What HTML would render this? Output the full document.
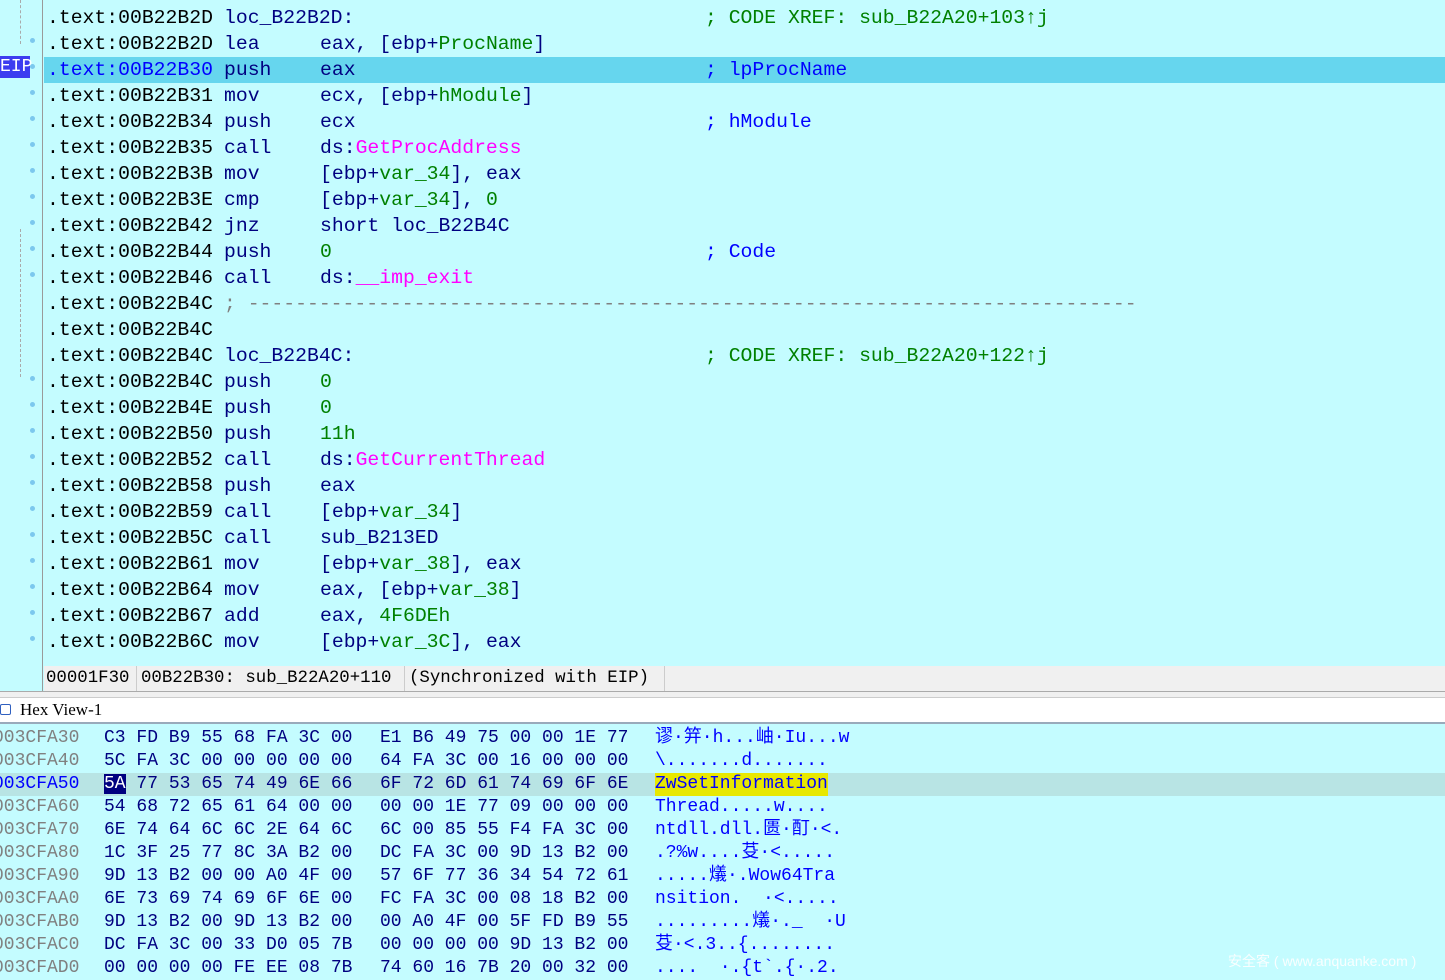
<!DOCTYPE html>
<html><head><meta charset="utf-8"><style>
body{margin:0;width:1445px;height:980px;overflow:hidden;background:#c4fcff;position:relative;font-family:"Liberation Mono","Noto Sans CJK SC",monospace}
.ida{position:absolute;left:0;top:0;width:1445px;height:664px;background:#c4fcff}
.gut{position:absolute;left:42px;top:0;width:1px;height:692px;background:#9a9a9a}
.r{position:absolute;left:0;height:26px;width:1445px;font-size:19.75px;line-height:26px;white-space:pre}
.r span{position:absolute}
.a{left:47px;color:#000}.m{left:224px;color:#000080}.o{left:320px;color:#000080}.c{left:705px;color:#0000ff}
.g{color:#008000}.p{color:#ff00ff}.cg{color:#008000}
.dot{position:absolute;left:30px;width:5px;height:5px;border-radius:3px;background:#7cc8ee}
.hl{background:#66d6ee;left:44px!important;width:1401px!important}
.hl .a{left:3px}.hl .m{left:180px}.hl .o{left:276px}.hl .c{left:661px}
.stat{position:absolute;left:44px;top:666px;width:1401px;height:25px;background:#f0f0f0;font-family:"Liberation Mono",monospace;font-size:17.4px;line-height:25px;color:#000;white-space:pre}
.stat span{position:absolute;top:0}
.hdr{position:absolute;left:0;top:697px;width:1445px;height:24px;background:#fff;border-top:1px solid #ccc;border-bottom:2px solid #9ab;font-family:"Liberation Serif",serif;font-size:17px;line-height:24px}
.h{position:absolute;left:0;height:23px;width:1445px;font-size:18px;line-height:23px;white-space:pre}
.h span{position:absolute}
.ha{left:-7px;color:#808080}.hb{left:104px;color:#000080}.hc{left:380px;color:#000080}.hd{left:655px;color:#0000ff}
</style></head><body>
<div class="ida"></div>
<div class="gut"></div>
<div style="position:absolute;left:20px;top:0;width:0;height:44px;border-left:1px dashed #aaa"></div>
<div style="position:absolute;left:20px;top:229px;width:0;height:148px;border-left:1px dashed #aaa"></div>

<div class="r" style="top:5px"><span class="a">.text:00B22B2D</span><span class="m">loc_B22B2D:</span><span class="c cg">; CODE XREF: sub_B22A20+103↑j</span></div>
<div class="r" style="top:31px"><span class="a">.text:00B22B2D</span><span class="m">lea</span><span class="o">eax, [ebp+<span style="position:static" class="g">ProcName</span>]</span></div>
<div class="r hl" style="top:57px"><span class="a" style="color:#0000ff">.text:00B22B30</span><span class="m">push</span><span class="o">eax</span><span class="c">; lpProcName</span></div>
<div class="r" style="top:83px"><span class="a">.text:00B22B31</span><span class="m">mov</span><span class="o">ecx, [ebp+<span style="position:static" class="g">hModule</span>]</span></div>
<div class="r" style="top:109px"><span class="a">.text:00B22B34</span><span class="m">push</span><span class="o">ecx</span><span class="c">; hModule</span></div>
<div class="r" style="top:135px"><span class="a">.text:00B22B35</span><span class="m">call</span><span class="o">ds:<span style="position:static" class="p">GetProcAddress</span></span></div>
<div class="r" style="top:161px"><span class="a">.text:00B22B3B</span><span class="m">mov</span><span class="o">[ebp+<span style="position:static" class="g">var_34</span>], eax</span></div>
<div class="r" style="top:187px"><span class="a">.text:00B22B3E</span><span class="m">cmp</span><span class="o">[ebp+<span style="position:static" class="g">var_34</span>], <span style="position:static" class="g">0</span></span></div>
<div class="r" style="top:213px"><span class="a">.text:00B22B42</span><span class="m">jnz</span><span class="o">short loc_B22B4C</span></div>
<div class="r" style="top:239px"><span class="a">.text:00B22B44</span><span class="m">push</span><span class="o g">0</span><span class="c">; Code</span></div>
<div class="r" style="top:265px"><span class="a">.text:00B22B46</span><span class="m">call</span><span class="o">ds:<span style="position:static" class="p">__imp_exit</span></span></div>
<div class="r" style="top:291px"><span class="a">.text:00B22B4C</span><span class="m" style="color:#808080">; ---------------------------------------------------------------------------</span></div>
<div class="r" style="top:317px"><span class="a">.text:00B22B4C</span></div>
<div class="r" style="top:343px"><span class="a">.text:00B22B4C</span><span class="m">loc_B22B4C:</span><span class="c cg">; CODE XREF: sub_B22A20+122↑j</span></div>
<div class="r" style="top:369px"><span class="a">.text:00B22B4C</span><span class="m">push</span><span class="o g">0</span></div>
<div class="r" style="top:395px"><span class="a">.text:00B22B4E</span><span class="m">push</span><span class="o g">0</span></div>
<div class="r" style="top:421px"><span class="a">.text:00B22B50</span><span class="m">push</span><span class="o g">11h</span></div>
<div class="r" style="top:447px"><span class="a">.text:00B22B52</span><span class="m">call</span><span class="o">ds:<span style="position:static" class="p">GetCurrentThread</span></span></div>
<div class="r" style="top:473px"><span class="a">.text:00B22B58</span><span class="m">push</span><span class="o">eax</span></div>
<div class="r" style="top:499px"><span class="a">.text:00B22B59</span><span class="m">call</span><span class="o">[ebp+<span style="position:static" class="g">var_34</span>]</span></div>
<div class="r" style="top:525px"><span class="a">.text:00B22B5C</span><span class="m">call</span><span class="o">sub_B213ED</span></div>
<div class="r" style="top:551px"><span class="a">.text:00B22B61</span><span class="m">mov</span><span class="o">[ebp+<span style="position:static" class="g">var_38</span>], eax</span></div>
<div class="r" style="top:577px"><span class="a">.text:00B22B64</span><span class="m">mov</span><span class="o">eax, [ebp+<span style="position:static" class="g">var_38</span>]</span></div>
<div class="r" style="top:603px"><span class="a">.text:00B22B67</span><span class="m">add</span><span class="o">eax, <span style="position:static" class="g">4F6DEh</span></span></div>
<div class="r" style="top:629px"><span class="a">.text:00B22B6C</span><span class="m">mov</span><span class="o">[ebp+<span style="position:static" class="g">var_3C</span>], eax</span></div>

<div style="position:absolute;left:0;top:56px;width:30px;height:22px;background:#3c3cf0;color:#fff;font-size:18px;line-height:22px;text-align:right">EIP</div>
<div class="dot" style="top:38px"></div><div class="dot" style="top:64px"></div><div class="dot" style="top:90px"></div><div class="dot" style="top:116px"></div><div class="dot" style="top:142px"></div><div class="dot" style="top:168px"></div><div class="dot" style="top:194px"></div><div class="dot" style="top:220px"></div><div class="dot" style="top:246px"></div><div class="dot" style="top:272px"></div><div class="dot" style="top:376px"></div><div class="dot" style="top:402px"></div><div class="dot" style="top:428px"></div><div class="dot" style="top:454px"></div><div class="dot" style="top:480px"></div><div class="dot" style="top:506px"></div><div class="dot" style="top:532px"></div><div class="dot" style="top:558px"></div><div class="dot" style="top:584px"></div><div class="dot" style="top:610px"></div><div class="dot" style="top:636px"></div>

<div class="stat"><span style="left:2px">00001F30</span><span style="left:92px;border-left:1px solid #ccc;padding-left:4px">00B22B30: sub_B22A20+110</span><span style="left:360px;border-left:1px solid #ccc;padding-left:4px">(Synchronized with EIP)</span><span style="left:620px;border-left:1px solid #ccc;height:25px"></span></div>
<div style="position:absolute;left:0;top:691px;width:1445px;height:6px;background:#f0f0f0;border-top:1px solid #aaa"></div>
<div class="hdr"><span style="position:absolute;left:0;top:6px;width:9px;height:9px;border:1px solid #3060c0;border-radius:2px"></span><span style="position:absolute;left:20px">Hex View-1</span></div>

<div class="h" style="top:727px"><span class="ha">003CFA30</span><span class="hb">C3 FD B9 55 68 FA 3C 00</span><span class="hc">E1 B6 49 75 00 00 1E 77</span><span class="hd">谬·笄·h...岫·Iu...w</span></div>
<div class="h" style="top:750px"><span class="ha">003CFA40</span><span class="hb">5C FA 3C 00 00 00 00 00</span><span class="hc">64 FA 3C 00 16 00 00 00</span><span class="hd">\.......d.......</span></div>
<div class="h" style="top:773px;background:#b8e4e4"><span class="ha" style="color:#0000ff">003CFA50</span><span class="hb"><span style="position:static;background:#000080;color:#fff">5A</span> 77 53 65 74 49 6E 66</span><span class="hc">6F 72 6D 61 74 69 6F 6E</span><span class="hd" style="background:#e8e800">ZwSetInformation</span></div>
<div class="h" style="top:796px"><span class="ha">003CFA60</span><span class="hb">54 68 72 65 61 64 00 00</span><span class="hc">00 00 1E 77 09 00 00 00</span><span class="hd">Thread.....w....</span></div>
<div class="h" style="top:819px"><span class="ha">003CFA70</span><span class="hb">6E 74 64 6C 6C 2E 64 6C</span><span class="hc">6C 00 85 55 F4 FA 3C 00</span><span class="hd">ntdll.dll.匮·酊·&lt;.</span></div>
<div class="h" style="top:842px"><span class="ha">003CFA80</span><span class="hb">1C 3F 25 77 8C 3A B2 00</span><span class="hc">DC FA 3C 00 9D 13 B2 00</span><span class="hd">.?%w....芟·&lt;.....</span></div>
<div class="h" style="top:865px"><span class="ha">003CFA90</span><span class="hb">9D 13 B2 00 00 A0 4F 00</span><span class="hc">57 6F 77 36 34 54 72 61</span><span class="hd">.....燨·.Wow64Tra</span></div>
<div class="h" style="top:888px"><span class="ha">003CFAA0</span><span class="hb">6E 73 69 74 69 6F 6E 00</span><span class="hc">FC FA 3C 00 08 18 B2 00</span><span class="hd">nsition.  ·&lt;.....</span></div>
<div class="h" style="top:911px"><span class="ha">003CFAB0</span><span class="hb">9D 13 B2 00 9D 13 B2 00</span><span class="hc">00 A0 4F 00 5F FD B9 55</span><span class="hd">.........燨·._  ·U</span></div>
<div class="h" style="top:934px"><span class="ha">003CFAC0</span><span class="hb">DC FA 3C 00 33 D0 05 7B</span><span class="hc">00 00 00 00 9D 13 B2 00</span><span class="hd">芟·&lt;.3..{........</span></div>
<div class="h" style="top:957px"><span class="ha">003CFAD0</span><span class="hb">00 00 00 00 FE EE 08 7B</span><span class="hc">74 60 16 7B 20 00 32 00</span><span class="hd">....  ·.{t`.{·.2.</span></div>
<div style="position:absolute;left:1228px;top:951px;color:#fff;font-family:'Liberation Sans','Noto Sans CJK SC',sans-serif;font-size:14px;opacity:.9">安全客 ( www.anquanke.com )</div>
</body></html>
